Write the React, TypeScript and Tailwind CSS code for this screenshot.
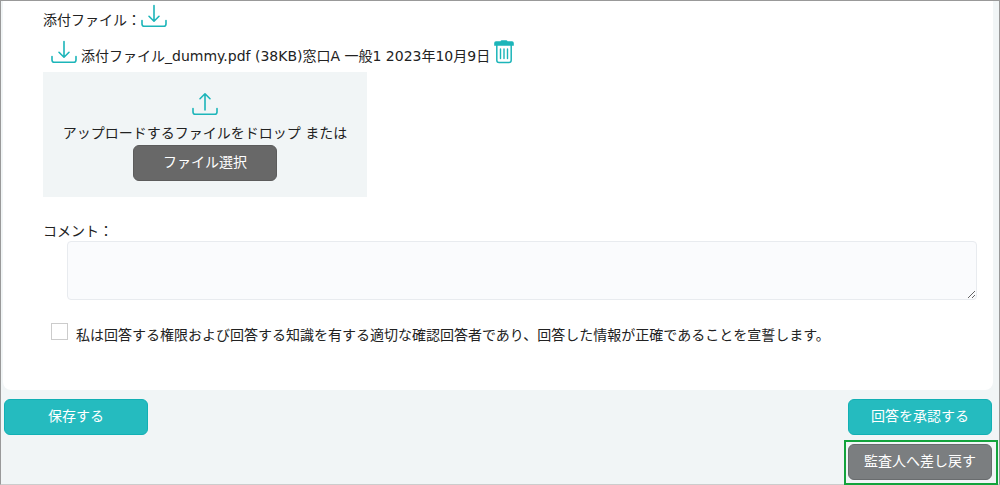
import { useState } from "react";
import type { ReactNode } from "react";

interface Attachment {
  id: number;
  label: string;
}

const attachments: Attachment[] = [
  { id: 1, label: "添付ファイル_dummy.pdf (38KB)窓口A 一般1 2023年10月9日" },
];

function TrayIcon({ direction }: { direction: "down" | "up" }) {
  return (
    <svg
      width="26"
      height="24"
      viewBox="0 0 26 24"
      fill="none"
      stroke="#1cb5b9"
      strokeWidth="1.6"
      strokeLinecap="round"
      strokeLinejoin="round"
      aria-hidden="true"
    >
      <path d="M1 16.500V20q0 2.300 2.300 2.300h19.400q2.300 0 2.300-2.300v-3.500" />
      {direction === "down" ? (
        <path d="M13 1.500v15.500M8 12.300l5 4.900 5-4.900" />
      ) : (
        <path d="M13 18V2M8 6.700l5-4.900 5 4.900" />
      )}
    </svg>
  );
}

function TrashIcon() {
  return (
    <svg width="20" height="24" viewBox="0 0 20 24" fill="none" aria-hidden="true">
      <path
        d="M6.500 1.300q.3-1 1.300-1h4.400q1 0 1.300 1H18q1.800 0 1.800 1.700v2.800H.2V3Q.2 1.300 2 1.300z"
        fill="#1cb5b9"
      />
      <path
        d="M2.800 5v15.300q0 2.300 2.300 2.300h9.800q2.300 0 2.300-2.300V5"
        stroke="#1cb5b9"
        strokeWidth="1.5"
      />
      <path
        d="M6.500 9v9.500M10 9v9.500M13.500 9v9.500"
        stroke="#1cb5b9"
        strokeWidth="1.4"
        strokeLinecap="round"
      />
    </svg>
  );
}

const tones = {
  teal: "border-[#12b0b4] bg-[#25bbbf]",
  dark: "border-[#5c5c5c] bg-[#686868]",
  gray: "border-[#696c6e] bg-[#7b7e80]",
};

function ActionButton({
  tone,
  children,
}: {
  tone: keyof typeof tones;
  children: ReactNode;
}) {
  return (
    <button
      type="button"
      className={`block h-9 w-36 rounded-md border pb-0.5 text-white ${tones[tone]}`}
    >
      {children}
    </button>
  );
}

export default function App() {
  const [comment, setComment] = useState("");
  const [agreed, setAgreed] = useState(false);

  return (
    <main className="min-h-screen border border-[#999] border-b-[#ccc] bg-[#f1f5f6] pr-px pl-[3px] font-['DejaVu_Sans','Noto_Sans_CJK_JP',sans-serif] text-sm leading-5 text-[#222]">
      <section className="-ml-px mr-[5px] rounded-b-lg bg-white pt-[3px] pr-4 pb-[45px] pl-10">
        <div className="flex items-end">
          <span className="leading-4">添付ファイル：</span>
          <button type="button" aria-label="すべてダウンロード">
            <TrayIcon direction="down" />
          </button>
        </div>

        <ul className="mt-3 ml-2">
          {attachments.map((file) => (
            <li key={file.id} className="flex items-end gap-1">
              <button type="button" aria-label="ダウンロード">
                <TrayIcon direction="down" />
              </button>
              <span className="leading-4">{file.label}</span>
              <button type="button" aria-label="削除">
                <TrashIcon />
              </button>
            </li>
          ))}
        </ul>

        <div className="mt-2 flex w-81 max-w-full flex-col items-center bg-[#f1f5f6] pt-5 pb-4">
          <TrayIcon direction="up" />
          <p className="mt-[7px] mb-0.5">アップロードするファイルをドロップ または</p>
          <ActionButton tone="dark">ファイル選択</ActionButton>
        </div>

        <label htmlFor="comment" className="mt-6 block">
          コメント：
        </label>
        <div className="pl-6">
          <textarea
            id="comment"
            value={comment}
            onChange={(e) => setComment(e.target.value)}
            className="block h-[59px] w-full rounded border border-[#e8ebef] bg-[#fafbfd] p-2"
          />
        </div>

        <div className="mt-[23px] ml-2 flex items-start gap-2">
          <input
            id="declaration"
            type="checkbox"
            checked={agreed}
            onChange={(e) => setAgreed(e.target.checked)}
            className="size-[17px] shrink-0 appearance-none border border-[#ccc] bg-white checked:bg-[#25bbbf]"
          />
          <label htmlFor="declaration" className="pt-0.5">
            私は回答する権限および回答する知識を有する適切な確認回答者であり、回答した情報が正確であることを宣誓します。
          </label>
        </div>
      </section>

      <footer className="mt-[9px] -mb-px flex items-start justify-between">
        <ActionButton tone="teal">保存する</ActionButton>
        <div className="flex flex-col items-end gap-[5px]">
          <div className="pr-1.5">
            <ActionButton tone="teal">回答を承認する</ActionButton>
          </div>
          <div className="border-2 border-[#12a33c] pt-0.5 pr-1 pb-[3px] pl-0.5">
            <ActionButton tone="gray">監査人へ差し戻す</ActionButton>
          </div>
        </div>
      </footer>
    </main>
  );
}
